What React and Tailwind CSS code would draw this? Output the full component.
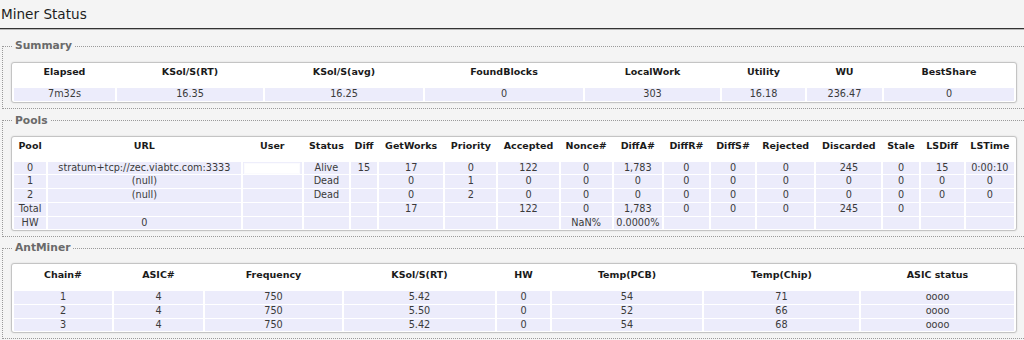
import React from "react";

function Section({ title, className, children }) {
  return (
    <fieldset
      className={
        "ml-[2px] w-[1024px] border border-dotted border-[#9a9a9a] px-[8px] pb-[5px] " +
        className
      }
    >
      <legend className="ml-[1px] px-[3px] text-[10.7px] leading-[14px] font-bold text-[#6a6a6a]">
        {title}
      </legend>
      <div className="bg-white border border-[#c4c4c4] rounded-[3px] shadow-[0_0_2px_rgba(0,0,0,0.12)]">
        {children}
      </div>
    </fieldset>
  );
}

function DataTable({ cols, headers, rows, thClass }) {
  return (
    <table className="w-full table-fixed border-separate border-spacing-x-[2px] border-spacing-y-[1px]">
      <colgroup>
        {cols.map((c, i) => (
          <col key={i} className={c} />
        ))}
      </colgroup>
      <thead>
        <tr>
          {headers.map((h, i) => (
            <th
              key={i}
              className={
                "px-0 text-center font-bold text-[9.5px] leading-[12px] text-[#1a1a1a] whitespace-nowrap " +
                thClass
              }
            >
              {h}
            </th>
          ))}
        </tr>
      </thead>
      <tbody>
        {rows.map((r, ri) => (
          <tr key={ri}>
            {r.map((v, ci) => (
              <td
                key={ci}
                className="bg-[#ececfb] px-0 py-0 text-center text-[9.7px] leading-[12.7px] text-[#3a3a3a] whitespace-nowrap overflow-hidden"
              >
                {v}
              </td>
            ))}
          </tr>
        ))}
      </tbody>
    </table>
  );
}

const Redacted = () => (
  <div className="mx-auto h-[9px] w-[54px] bg-white shadow-[0_0_1px_1px_rgba(255,255,255,0.8)]" />
);

export default function App() {
  const summaryCols = [
    "w-[101px]",
    "w-[146px]",
    "w-[158px]",
    "w-[158px]",
    "w-[135px]",
    "w-[83px]",
    "w-[75px]",
    "w-[130px]",
  ];
  const summaryHeaders = [
    "Elapsed",
    "KSol/S(RT)",
    "KSol/S(avg)",
    "FoundBlocks",
    "LocalWork",
    "Utility",
    "WU",
    "BestShare",
  ];
  const summaryRows = [["7m32s", "16.35", "16.25", "0", "303", "16.18", "236.47", "0"]];

  const poolCols = [
    "w-[32px]",
    "w-[192px]",
    "w-[59px]",
    "w-[45px]",
    "w-[26px]",
    "w-[64px]",
    "w-[51px]",
    "w-[60px]",
    "w-[51px]",
    "w-[48px]",
    "w-[45px]",
    "w-[44px]",
    "w-[57px]",
    "w-[65px]",
    "w-[35px]",
    "w-[43px]",
    "w-[48px]",
  ];
  const poolHeaders = [
    "Pool",
    "URL",
    "User",
    "Status",
    "Diff",
    "GetWorks",
    "Priority",
    "Accepted",
    "Nonce#",
    "DiffA#",
    "DiffR#",
    "DiffS#",
    "Rejected",
    "Discarded",
    "Stale",
    "LSDiff",
    "LSTime",
  ];
  const poolRows = [
    ["0", "stratum+tcp://zec.viabtc.com:3333", <Redacted key="r" />, "Alive", "15", "17", "0", "122", "0", "1,783", "0", "0", "0", "245", "0", "15", "0:00:10"],
    ["1", "(null)", "", "Dead", "", "0", "1", "0", "0", "0", "0", "0", "0", "0", "0", "0", "0"],
    ["2", "(null)", "", "Dead", "", "0", "2", "0", "0", "0", "0", "0", "0", "0", "0", "0", "0"],
    ["Total", "", "", "", "", "17", "", "122", "0", "1,783", "0", "0", "0", "245", "0", "", ""],
    ["HW", "0", "", "", "", "", "", "", "NaN%", "0.0000%", "", "", "", "", "", "", ""],
  ];

  const antCols = [
    "w-[98px]",
    "w-[89px]",
    "w-[137px]",
    "w-[151px]",
    "w-[53px]",
    "w-[150px]",
    "w-[155px]",
    "w-[153px]",
  ];
  const antHeaders = [
    "Chain#",
    "ASIC#",
    "Frequency",
    "KSol/S(RT)",
    "HW",
    "Temp(PCB)",
    "Temp(Chip)",
    "ASIC status",
  ];
  const antRows = [
    ["1", "4", "750", "5.42", "0", "54", "71", "oooo"],
    ["2", "4", "750", "5.50", "0", "52", "66", "oooo"],
    ["3", "4", "750", "5.42", "0", "54", "68", "oooo"],
  ];

  return (
    <div className="w-[1024px] h-[340px] overflow-hidden bg-[#f4f4f4] font-['DejaVu_Sans',sans-serif] text-[#333]">
      <h2 className="pl-[1px] pt-[5px] pb-[5px] text-[13.6px] leading-[18px] font-normal text-[#1e1e1e] border-b border-[#333]">
        Miner Status
      </h2>
      <div className="h-px bg-[#b8b8b8]" />
      <Section title="Summary" className="mt-[9px] pt-[9px]">
        <DataTable
          cols={summaryCols}
          headers={summaryHeaders}
          rows={summaryRows}
          thClass="pt-[2px] pb-[9px]"
        />
      </Section>
      <Section title="Pools" className="mt-[5px] pt-[8px]">
        <DataTable
          cols={poolCols}
          headers={poolHeaders}
          rows={poolRows}
          thClass="pt-[2px] pb-[9px]"
        />
      </Section>
      <Section title="AntMiner" className="mt-[4px] pt-[8px]">
        <DataTable
          cols={antCols}
          headers={antHeaders}
          rows={antRows}
          thClass="pt-[4px] pb-[9px]"
        />
      </Section>
    </div>
  );
}
